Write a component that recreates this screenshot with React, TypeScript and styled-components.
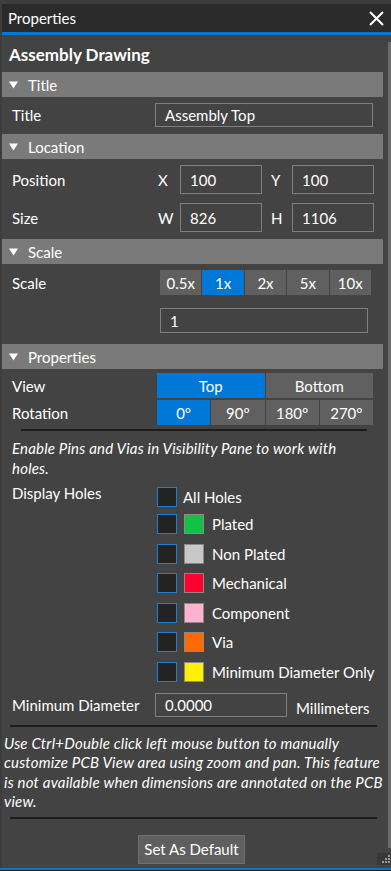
import React from "react";
import styled, { createGlobalStyle } from "styled-components";

const Global = createGlobalStyle`
  html, body { margin: 0; padding: 0; background: #3d3d3d; }
  body { font-family: Lato, "Noto Sans", sans-serif; color: #ffffff; }
  * { box-sizing: border-box; }
`;

const Page = styled.div`
  width: 391px;
  height: 871px;
  display: flex;
  flex-direction: column;
  background: #3d3d3d;
  overflow: hidden;
`;

const Window = styled.div`
  flex: 1;
  min-height: 0;
  padding: 4px 0 0 2px;
  display: flex;
  flex-direction: column;
`;

const TitleBar = styled.div`
  height: 31px;
  flex: none;
  background: #2b2b2b;
  border-bottom: 3px solid #0078d7;
  display: flex;
  align-items: center;
  justify-content: space-between;
  padding: 0 7px 0 6px;
  font-size: 15px;
`;

const CloseButton = styled.button`
  border: 0;
  background: none;
  padding: 0;
  width: 15px;
  height: 15px;
  display: flex;
  color: #fff;
`;

const Body = styled.div`
  flex: 1;
  min-height: 0;
  display: flex;
  background: #434343;
  position: relative;
`;

const Content = styled.div`
  flex: 1;
  display: flex;
  flex-direction: column;
`;

const ScrollTrack = styled.div`
  width: 4px;
  padding: 7px 0 20px 1px;
  display: flex;
`;

const ScrollThumb = styled.div`
  flex: 1;
  background: #6a6a6a;
`;

const Heading = styled.div`
  height: 37px;
  padding: 9px 0 0 7px;
  font-size: 17px;
  font-weight: 700;
`;

const SectionHeader = styled.div`
  height: 25px;
  margin-right: 4px;
  background: #7a7a7a;
  display: flex;
  align-items: center;
  gap: 10px;
  padding-left: 7px;
  font-size: 15px;
`;

const Section = styled.div<{ $pad: string; $gap?: number }>`
  padding: ${(p) => p.$pad};
  display: flex;
  flex-direction: column;
  gap: ${(p) => p.$gap ?? 0}px;
`;

const Row = styled.div<{ $align?: string }>`
  display: flex;
  align-items: ${(p) => p.$align ?? "center"};
  padding-left: 10px;
`;

const Label = styled.div<{ $w: number; $mt?: number }>`
  width: ${(p) => p.$w}px;
  margin-top: ${(p) => p.$mt ?? 0}px;
  flex: none;
  font-size: 15px;
`;

const AxisLabel = styled.div<{ $w: number; $pl: number }>`
  width: ${(p) => p.$w}px;
  padding-left: ${(p) => p.$pl}px;
  flex: none;
  font-size: 15px;
`;

const Field = styled.div<{ $w: number; $h: number }>`
  width: ${(p) => p.$w}px;
  height: ${(p) => p.$h}px;
  border: 1px solid #7f7f7f;
  background: #434343;
  display: flex;
  align-items: center;
  padding-left: 9px;
  font-size: 15px;
  flex: none;
`;

const Segmented = styled.div<{ $cols: number; $w: number }>`
  width: ${(p) => p.$w}px;
  display: grid;
  grid-template-columns: repeat(${(p) => p.$cols}, 1fr);
  gap: 1px;
`;

const SegButton = styled.div<{ $active?: boolean }>`
  height: 25px;
  background: ${(p) => (p.$active ? "#0078d7" : "#606060")};
  display: flex;
  align-items: center;
  justify-content: center;
  font-size: 15px;
`;

const Separator = styled.div<{ $l: number; $r: number }>`
  height: 2px;
  margin: 0 ${(p) => p.$r}px 0 ${(p) => p.$l}px;
  background: #1c1c1c;
`;

const Note = styled.div<{ $pl: number; $pr: number }>`
  font-style: italic;
  font-size: 15px;
  letter-spacing: 0.2px;
  line-height: 19.5px;
  padding: 0 ${(p) => p.$pr}px 0 ${(p) => p.$pl}px;
`;

const CheckList = styled.div`
  display: flex;
  flex-direction: column;
  gap: 9.5px;
`;

const CheckRow = styled.div<{ $first?: boolean }>`
  display: flex;
  align-items: center;
  height: 20px;
  margin-bottom: ${(p) => (p.$first ? -2.5 : 0)}px;
  font-size: 15px;
`;

const Checkbox = styled.div`
  width: 20px;
  height: 20px;
  border: 1px solid #1a7fd6;
  background: #232323;
  flex: none;
`;

const Swatch = styled.div<{ $color: string }>`
  width: 20px;
  height: 20px;
  margin-left: 7px;
  border: 1px solid #8a8a8a;
  background: ${(p) => p.$color};
  flex: none;
`;

const CheckText = styled.span<{ $gap: number }>`
  margin-left: ${(p) => p.$gap}px;
`;

const Unit = styled.div`
  margin-left: 9px;
  padding-top: 6px;
  font-size: 15px;
`;

const Footer = styled.div`
  display: flex;
  justify-content: center;
  padding: 16px 6px 0 0;
`;

const DefaultButton = styled.button`
  width: 107px;
  height: 29px;
  background: #5f5f5f;
  border: 1px solid #6f6f6f;
  color: #fff;
  font-family: inherit;
  font-size: 15px;
  padding: 0;
`;

const Grip = styled.div`
  position: absolute;
  right: 0;
  bottom: 3px;
  width: 14px;
  height: 12px;
  background: #383838;
  display: flex;
  align-items: flex-end;
  justify-content: flex-end;
`;

const Taskbar = styled.div`
  height: 3px;
  flex: none;
  background: #0078d7;
  border-bottom: 1px solid #1f1f1f;
`;

const Triangle = () => (
  <svg width="9" height="8" viewBox="0 0 9 8">
    <polygon points="0,0.5 9,0.5 4.5,7.5" fill="#fff" />
  </svg>
);

const holes = [
  { label: "Plated", color: "#12c244" },
  { label: "Non Plated", color: "#c8c8c8" },
  { label: "Mechanical", color: "#ff0030" },
  { label: "Component", color: "#ffb2d0" },
  { label: "Via", color: "#ff6a00" },
  { label: "Minimum Diameter Only", color: "#fff200" },
];

export default function App() {
  return (
    <Page>
      <Global />
      <Window>
        <TitleBar>
          <span>Properties</span>
          <CloseButton aria-label="Close">
            <svg width="15" height="15" viewBox="0 0 15 15">
              <path d="M1 1 L14 14 M14 1 L1 14" stroke="#fff" strokeWidth="2" />
            </svg>
          </CloseButton>
        </TitleBar>
        <Body>
          <Content>
            <Heading>Assembly Drawing</Heading>

            <SectionHeader>
              <Triangle />
              Title
            </SectionHeader>
            <Section $pad="6px 0 7px">
              <Row>
                <Label $w={143}>Title</Label>
                <Field $w={218} $h={24}>Assembly Top</Field>
              </Row>
            </Section>

            <SectionHeader>
              <Triangle />
              Location
            </SectionHeader>
            <Section $pad="6px 0 7px" $gap={9}>
              <Row>
                <Label $w={146}>Position</Label>
                <AxisLabel $w={22} $pl={0}>X</AxisLabel>
                <Field $w={82} $h={29}>100</Field>
                <AxisLabel $w={30} $pl={9}>Y</AxisLabel>
                <Field $w={82} $h={29}>100</Field>
              </Row>
              <Row>
                <Label $w={146}>Size</Label>
                <AxisLabel $w={22} $pl={0}>W</AxisLabel>
                <Field $w={82} $h={29}>826</Field>
                <AxisLabel $w={30} $pl={9}>H</AxisLabel>
                <Field $w={82} $h={29}>1106</Field>
              </Row>
            </Section>

            <SectionHeader>
              <Triangle />
              Scale
            </SectionHeader>
            <Section $pad="6px 0 11px" $gap={13}>
              <Row>
                <Label $w={148}>Scale</Label>
                <Segmented $cols={5} $w={211}>
                  <SegButton>0.5x</SegButton>
                  <SegButton $active>1x</SegButton>
                  <SegButton>2x</SegButton>
                  <SegButton>5x</SegButton>
                  <SegButton>10x</SegButton>
                </Segmented>
              </Row>
              <Row>
                <Label $w={148} />
                <Field $w={208} $h={25}>1</Field>
              </Row>
            </Section>

            <SectionHeader>
              <Triangle />
              Properties
            </SectionHeader>
            <Section $pad="4px 0 0" $gap={2}>
              <Row>
                <Label $w={145}>View</Label>
                <Segmented $cols={2} $w={216}>
                  <SegButton $active>Top</SegButton>
                  <SegButton>Bottom</SegButton>
                </Segmented>
              </Row>
              <Row>
                <Label $w={145}>Rotation</Label>
                <Segmented $cols={4} $w={216}>
                  <SegButton $active>0°</SegButton>
                  <SegButton>90°</SegButton>
                  <SegButton>180°</SegButton>
                  <SegButton>270°</SegButton>
                </Segmented>
              </Row>
            </Section>
            <Section $pad="4px 0 0">
              <Separator $l={19} $r={20} />
            </Section>
            <Section $pad="8px 0 0">
              <Note $pl={10} $pr={22}>
                Enable Pins and Vias in Visibility Pane to work with holes.
              </Note>
            </Section>
            <Section $pad="9px 0 0">
              <Row $align="flex-start">
                <Label $w={145} $mt={-3}>Display Holes</Label>
                <CheckList>
                  <CheckRow $first>
                    <Checkbox />
                    <CheckText $gap={6}>All Holes</CheckText>
                  </CheckRow>
                  {holes.map((h) => (
                    <CheckRow key={h.label}>
                      <Checkbox />
                      <Swatch $color={h.color} />
                      <CheckText $gap={8}>{h.label}</CheckText>
                    </CheckRow>
                  ))}
                </CheckList>
              </Row>
            </Section>
            <Section $pad="11px 0 0">
              <Row>
                <Label $w={143}>Minimum Diameter</Label>
                <Field $w={132} $h={24}>0.0000</Field>
                <Unit>Millimeters</Unit>
              </Row>
            </Section>
            <Section $pad="8px 0 0">
              <Separator $l={8} $r={10} />
            </Section>
            <Section $pad="7px 0 0">
              <Note $pl={2} $pr={0}>
                Use Ctrl+Double click left mouse button to manually customize PCB
                View area using zoom and pan. This feature is not available when
                dimensions are annotated on the PCB view.
              </Note>
            </Section>
            <Section $pad="5px 0 0">
              <Separator $l={8} $r={10} />
            </Section>
            <Footer>
              <DefaultButton>Set As Default</DefaultButton>
            </Footer>
          </Content>
          <ScrollTrack>
            <ScrollThumb />
          </ScrollTrack>
          <Grip>
            <svg width="12" height="11" viewBox="0 0 12 11">
              <g fill="#9a9a9a">
                <rect x="9" y="1" width="2" height="2" />
                <rect x="6" y="4" width="2" height="2" />
                <rect x="9" y="4" width="2" height="2" />
                <rect x="3" y="7" width="2" height="2" />
                <rect x="6" y="7" width="2" height="2" />
                <rect x="9" y="7" width="2" height="2" />
              </g>
            </svg>
          </Grip>
        </Body>
      </Window>
      <Taskbar />
    </Page>
  );
}
